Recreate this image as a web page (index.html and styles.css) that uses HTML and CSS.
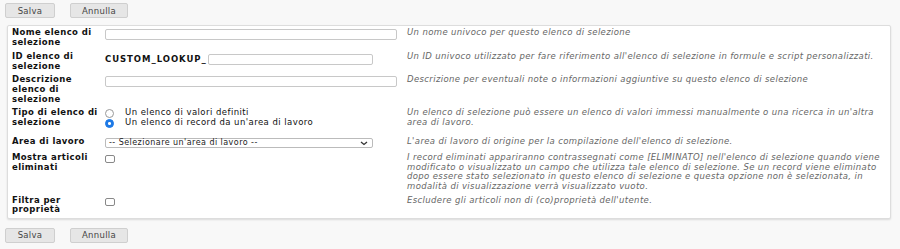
FILE: index.html
```html
<!DOCTYPE html>
<html lang="it">
<head>
    <meta charset="UTF-8">
    <title>Elenco di selezione</title>
    <link rel="stylesheet" href="styles.css">
</head>
<body>
    <div class="toolbar">
        <button class="btn btn-save">Salva</button>
        <button class="btn btn-cancel">Annulla</button>
    </div>

    <div class="panel">
        <table class="form">
            <tr class="row-name">
                <th>Nome elenco di selezione</th>
                <td class="field"><input type="text" class="text-input wide"></td>
                <td class="help">Un nome univoco per questo elenco di selezione</td>
            </tr>
            <tr class="row-id">
                <th>ID elenco di selezione</th>
                <td class="field"><div class="prefixed"><span class="prefix">CUSTOM_LOOKUP_</span><input type="text" class="text-input short"></div></td>
                <td class="help">Un ID univoco utilizzato per fare riferimento all'elenco di selezione in formule e script personalizzati.</td>
            </tr>
            <tr class="row-desc">
                <th>Descrizione elenco di selezione</th>
                <td class="field"><input type="text" class="text-input wide"></td>
                <td class="help">Descrizione per eventuali note o informazioni aggiuntive su questo elenco di selezione</td>
            </tr>
            <tr class="row-type">
                <th>Tipo di elenco di selezione</th>
                <td class="field">
                    <label class="radio"><span class="radio-dot"></span>Un elenco di valori definiti</label>
                    <label class="radio"><span class="radio-dot checked"></span>Un elenco di record da un'area di lavoro</label>
                </td>
                <td class="help">Un elenco di selezione può essere un elenco di valori immessi manualmente o una ricerca in un'altra area di lavoro.</td>
            </tr>
            <tr class="row-area">
                <th>Area di lavoro</th>
                <td class="field">
                    <div class="select">
                        <span>-- Selezionare un'area di lavoro --</span>
                        <svg width="8" height="5" viewBox="0 0 8 5"><path d="M1 1 L4 3.5 L7 1" fill="none" stroke="#333" stroke-width="1.3"/></svg>
                    </div>
                </td>
                <td class="help">L'area di lavoro di origine per la compilazione dell'elenco di selezione.</td>
            </tr>
            <tr class="row-deleted">
                <th>Mostra articoli eliminati</th>
                <td class="field"><span class="checkbox"></span></td>
                <td class="help">I record eliminati appariranno contrassegnati come [ELIMINATO] nell'elenco di selezione quando viene modificato o visualizzato un campo che utilizza tale elenco di selezione. Se un record viene eliminato dopo essere stato selezionato in questo elenco di selezione e questa opzione non è selezionata, in modalità di visualizzazione verrà visualizzato vuoto.</td>
            </tr>
            <tr class="row-owner">
                <th>Filtra per proprietà</th>
                <td class="field"><span class="checkbox"></span></td>
                <td class="help">Escludere gli articoli non di (co)proprietà dell'utente.</td>
            </tr>
        </table>
    </div>

    <div class="toolbar">
        <button class="btn btn-save">Salva</button>
        <button class="btn btn-cancel">Annulla</button>
    </div>
</body>
</html>
```

FILE: styles.css
```css
body {
    margin: 0;
    background-color: #f8f8f8;
    font-family: 'DejaVu Sans', sans-serif;
    font-size: 8.5px;
    color: #111;
}
.toolbar {
    display: flex;
    gap: 15px;
    padding: 3px 5px 0 5px;
    height: 22px;
    box-sizing: border-box;
}
.btn {
    height: 15px;
    padding: 0;
    background-color: #e6e6e6;
    border: 1px solid #cfcfcf;
    border-radius: 2px;
    color: #444;
    font-family: 'DejaVu Sans', sans-serif;
    font-size: 8.5px;
    letter-spacing: 0.3px;
}
.btn-save {
    width: 50px;
}
.btn-cancel {
    width: 58px;
}
.panel {
    margin: 3px 9px 6px 7px;
    background-color: #fff;
    border: 1px solid #ddd;
    border-radius: 2px;
    box-shadow: 0 1px 2px rgba(0,0,0,0.12);
    padding: 0 0 0 4px;
}
.form {
    border-collapse: collapse;
    width: 100%;
}
.form th,
.form td {
    vertical-align: top;
    padding: 2px 0;
    line-height: 9.6px;
}
.form th {
    text-align: left;
    font-weight: bold;
    width: 87px;
    padding-right: 6px;
    letter-spacing: 0.4px;
}
.field {
    width: 302px;
}
.help {
    color: #666;
    font-style: italic;
    letter-spacing: 0.37px;
    padding-right: 4px !important;
}
.text-input {
    display: block;
    height: 11px;
    border: 1px solid #c8c8c8;
    border-radius: 2px;
    padding: 0;
    box-sizing: border-box;
}
.wide {
    width: 292px;
}
.short {
    width: 165px;
}
.prefixed {
    display: flex;
    align-items: center;
}
.prefix {
    font-weight: bold;
    width: 103px;
    letter-spacing: 0.95px;
}

/* row spacing */
.row-name td.field {
    padding-top: 3px;
}
.row-id th,
.row-id td {
    padding-top: 3px;
}
.row-id td.field {
    padding-top: 5px;
}
.row-desc td.field {
    padding-top: 3px;
}
.row-area th,
.row-area td {
    padding-top: 7px;
}
.row-area td.field {
    padding-top: 8px;
}
.row-deleted th,
.row-deleted td {
    padding-top: 3px;
}
.row-deleted td.field {
    padding-top: 5px;
}
.row-owner th,
.row-owner td {
    padding-top: 2px;
    padding-bottom: 3px;
}
.row-owner td.field {
    padding-top: 4px;
}

.radio {
    display: flex;
    align-items: center;
    gap: 11px;
    height: 10px;
    letter-spacing: 0.45px;
}
.radio-dot {
    width: 7px;
    height: 7px;
    border: 1px solid #999;
    border-radius: 50%;
    background-color: #fff;
}
.radio-dot.checked {
    border-color: #1e7ae6;
    background: radial-gradient(circle, #fff 0 1.3px, #1e7ae6 1.6px);
}
.select {
    display: flex;
    align-items: center;
    justify-content: space-between;
    width: 268px;
    height: 10px;
    box-sizing: border-box;
    border: 1px solid #bbb;
    border-radius: 2px;
    padding: 0 4px 0 3px;
    color: #222;
    font-size: 8px;
    letter-spacing: 0.45px;
}
.checkbox {
    display: block;
    width: 8px;
    height: 6px;
    border: 1px solid #888;
    border-radius: 2px;
}
```
